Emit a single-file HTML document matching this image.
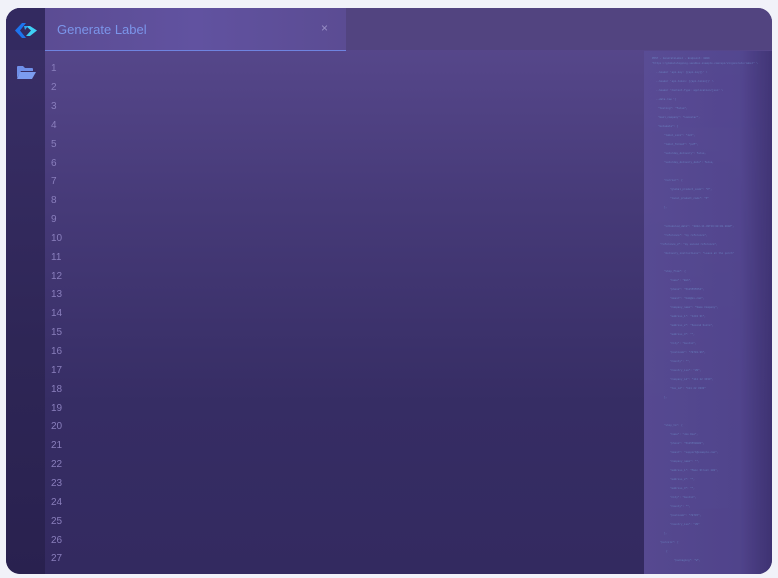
<!DOCTYPE html>
<html><head><style>
*{margin:0;padding:0;box-sizing:border-box}
body{width:778px;height:578px;background:#f1f2f9;font-family:"Liberation Sans",sans-serif;overflow:hidden;position:relative}
.win{position:absolute;left:6px;top:8px;width:766px;height:566px;border-radius:14px;overflow:hidden;background:linear-gradient(180deg,#5a4a8f 0%,#463a78 35%,#362d64 70%,#332a60 100%)}
.side{position:absolute;left:0;top:0;width:39px;height:100%;background:linear-gradient(180deg,#3a2f68 0%,#2e2656 60%,#29214f 100%)}
.sidetop{position:absolute;left:0;top:0;width:39px;height:42px;background:#332a60}
.tabbar{position:absolute;left:39px;top:0;right:0;height:42px;background:#524480}
.tab{position:absolute;left:39px;top:0;width:301px;height:43px;background:linear-gradient(90deg,#5b4c93,#6152a0 50%,#5b4c93);border-bottom:1px solid #6f84e0}
.tab span{position:absolute;left:12px;top:14px;font-size:13px;color:#7b95ea}
.tab i{position:absolute;right:18px;top:13px;font-style:normal;font-size:12px;color:#9a90c6}
.ln{position:absolute;left:51px;font-size:10px;color:#8a7fbd;width:20px}
.mm{position:absolute;left:638px;top:43px;width:128px;height:523px;background:linear-gradient(90deg,#5a4d96 0%,#544791 75%,#3f3374 100%);opacity:.9}
.mm div{position:absolute;font-size:2.6px;color:#7399d4;opacity:.75;white-space:pre;line-height:3px;font-family:"Liberation Mono",monospace}
</style></head><body>
<div class="win">
<div class="side"></div>
<div class="sidetop"></div>
<svg style="position:absolute;left:8px;top:14px" width="24" height="17" viewBox="0 0 24 17">
<path d="M8 1 L12 1 L6 8.5 L12 16 L8 16 L1 8.5Z" fill="#1d74ee"/>
<path d="M12 4 L16 4 L23 8.5 L16 14 L12 14 L17 8.5Z" fill="#3fd0f5"/>
<path d="M10 4 L14 4 L11 8 Z" fill="#2aa8f3"/>
</svg>
<svg style="position:absolute;left:10px;top:57px" width="20" height="15" viewBox="0 0 20 15">
<path d="M1 2 Q1 1 2 1 L7 1 L9 3 L16 3 Q17 3 17 4 L17 6 L5 6 L1 13Z" fill="#6f8fe8"/>
<path d="M4 7 L20 7 L16 14 L1 14Z" fill="#7c9cf0"/>
</svg>
<div class="tabbar"></div>
<div class="tab"><span>Generate Label</span><i>×</i></div>
<div class="mm">
<div style="left:8px;top:6px">POST - GenerateLabel - Endpoint: 0009</div>
<div style="left:8px;top:11px">"https://globalshipping.sandbox.example.com/api/v1/generate/label" \</div>
<div style="left:12px;top:20px">--header 'api-key: {{api-key}}' \</div>
<div style="left:12px;top:29px">--header 'api-token: {{api-token}}' \</div>
<div style="left:12px;top:38px">--header 'Content-Type: application/json' \</div>
<div style="left:12px;top:47px">--data-raw '{</div>
<div style="left:14px;top:56px">"testing": "false",</div>
<div style="left:14px;top:65px">"mail_company": "Lonestar",</div>
<div style="left:14px;top:74px">"metadata": {</div>
<div style="left:20px;top:83px">"label_size": "4x6",</div>
<div style="left:20px;top:92px">"label_format": "pdf",</div>
<div style="left:20px;top:101px">"saturday_delivery": false,</div>
<div style="left:20px;top:110px">"saturday_delivery_date": false,</div>
<div style="left:20px;top:128px">"carrier": {</div>
<div style="left:26px;top:137px">"global_product_code": "P",</div>
<div style="left:26px;top:146px">"local_product_code": "P"</div>
<div style="left:20px;top:155px">},</div>
<div style="left:20px;top:174px">"scheduled_date": "2022-11-30T16:00:00.000Z",</div>
<div style="left:20px;top:183px">"reference": "my reference",</div>
<div style="left:16px;top:192px">"reference_2": "my second reference",</div>
<div style="left:20px;top:201px">"delivery_instructions": "Leave at the porch"</div>
<div style="left:20px;top:219px">"ship_from": {</div>
<div style="left:26px;top:228px">"name": "Bob",</div>
<div style="left:26px;top:237px">"phone": "5125555554",</div>
<div style="left:26px;top:246px">"email": "bob@ex.com",</div>
<div style="left:26px;top:255px">"company_name": "Some Company",</div>
<div style="left:26px;top:264px">"address_1": "1234 St",</div>
<div style="left:26px;top:273px">"address_2": "Second Suite",</div>
<div style="left:26px;top:282px">"address_3": "",</div>
<div style="left:26px;top:291px">"city": "Austin",</div>
<div style="left:26px;top:300px">"postcode": "78701-96",</div>
<div style="left:26px;top:309px">"county": "",</div>
<div style="left:26px;top:318px">"country_iso": "US",</div>
<div style="left:26px;top:327px">"company_id": "111 22 3333",</div>
<div style="left:26px;top:336px">"tax_id": "111 22 3333"</div>
<div style="left:20px;top:345px">},</div>
<div style="left:20px;top:373px">"ship_to": {</div>
<div style="left:26px;top:382px">"name": "Joe Doe",</div>
<div style="left:26px;top:391px">"phone": "5125550000",</div>
<div style="left:26px;top:400px">"email": "support@example.com",</div>
<div style="left:26px;top:409px">"company_name": "",</div>
<div style="left:26px;top:418px">"address_1": "Main Street 100",</div>
<div style="left:26px;top:427px">"address_2": "",</div>
<div style="left:26px;top:436px">"address_3": "",</div>
<div style="left:26px;top:445px">"city": "Austin",</div>
<div style="left:26px;top:454px">"county": "",</div>
<div style="left:26px;top:463px">"postcode": "78745",</div>
<div style="left:26px;top:472px">"country_iso": "US"</div>
<div style="left:20px;top:481px">},</div>
<div style="left:16px;top:490px">"parcels": [</div>
<div style="left:22px;top:499px">{</div>
<div style="left:30px;top:508px">"packaging": "W",</div>
</div>
</div>
<div class="ln" style="top:63px">1</div>
<div class="ln" style="top:82px">2</div>
<div class="ln" style="top:101px">3</div>
<div class="ln" style="top:120px">4</div>
<div class="ln" style="top:139px">5</div>
<div class="ln" style="top:158px">6</div>
<div class="ln" style="top:176px">7</div>
<div class="ln" style="top:195px">8</div>
<div class="ln" style="top:214px">9</div>
<div class="ln" style="top:233px">10</div>
<div class="ln" style="top:252px">11</div>
<div class="ln" style="top:271px">12</div>
<div class="ln" style="top:289px">13</div>
<div class="ln" style="top:308px">14</div>
<div class="ln" style="top:327px">15</div>
<div class="ln" style="top:346px">16</div>
<div class="ln" style="top:365px">17</div>
<div class="ln" style="top:384px">18</div>
<div class="ln" style="top:403px">19</div>
<div class="ln" style="top:421px">20</div>
<div class="ln" style="top:440px">21</div>
<div class="ln" style="top:459px">22</div>
<div class="ln" style="top:478px">23</div>
<div class="ln" style="top:497px">24</div>
<div class="ln" style="top:516px">25</div>
<div class="ln" style="top:535px">26</div>
<div class="ln" style="top:553px">27</div>
</body></html>
